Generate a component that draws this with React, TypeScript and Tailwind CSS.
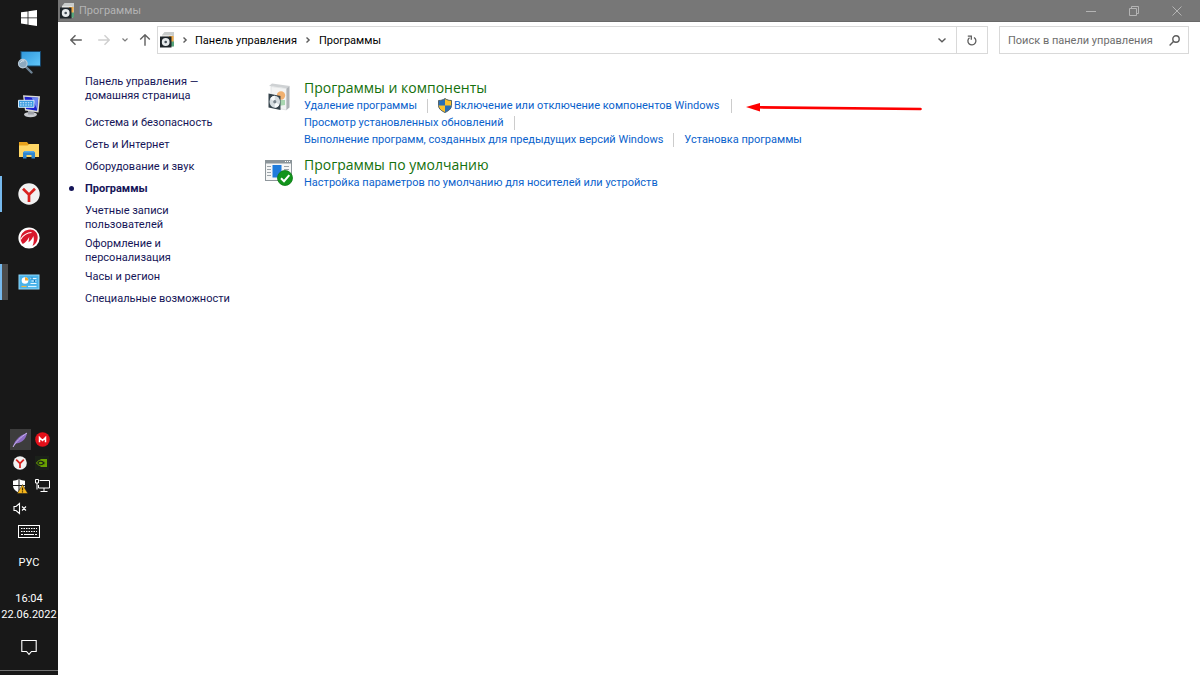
import React, { ReactNode } from 'react';

const WindowsLogo = () => (
  <svg width="16" height="16" viewBox="0 0 16 16" fill="#fff" aria-hidden="true">
    <path d="M0 2.3 6.6 1.4v6.1H0zM7.4 1.3 16 0v7.5H7.4zM0 8.3h6.6v6.2L0 13.6zM7.4 8.3H16V16l-8.6-1.3z" />
  </svg>
);

const SearchDesktopIcon = () => (
  <svg width="24" height="24" viewBox="0 0 24 24" aria-hidden="true">
    <defs>
      <linearGradient id="desk" x1="0" y1="0" x2="1" y2="1">
        <stop offset="0" stopColor="#2f97dc" />
        <stop offset="1" stopColor="#62c8fb" />
      </linearGradient>
    </defs>
    <rect x="4" y="1.5" width="19.5" height="14.5" fill="url(#desk)" stroke="#174a70" />
    <path d="m9 17 5.5 5.5" stroke="#6f8496" strokeWidth="2.4" strokeLinecap="round" />
    <circle cx="5.8" cy="13.6" r="4.3" fill="#8ca9c0" stroke="#b8c8d5" strokeWidth="1.2" />
    <path d="M3.4 12.8a3 3 0 0 1 3.8-1.9" stroke="#dfeaf2" fill="none" />
  </svg>
);

const RemoteKeyboardIcon = () => (
  <svg width="24" height="24" viewBox="0 0 24 24" aria-hidden="true">
    <ellipse cx="13.5" cy="20.6" rx="6.5" ry="2.6" fill="#c9cbd0" />
    <path d="M11 16h5.5l.5 4.5h-6z" fill="#9da0a8" />
    <path d="M6 1.2 23 2.3 21.5 18.5 8 16.5z" fill="#dcdcd8" />
    <path d="m7.5 2.8 13.7 1L20 16.7 9 15z" fill="#1c20cc" />
    <path d="M14.5 3.3 21.2 3.8 20 15z" fill="#6c86f2" />
    <path d="M1.5 6.3H17v7H1.5z" fill="#3a9be0" stroke="#d7eafa" strokeWidth="1" />
    <path d="M3 8.7h13M3 11h13" stroke="#e2f2ff" strokeWidth="1.1" strokeDasharray="1.6 1" />
  </svg>
);

const ExplorerIcon = () => (
  <svg width="22" height="20" viewBox="0 0 22 20" aria-hidden="true">
    <path d="M1 2h8l1.5 2H21v13H1z" fill="#e8a21c" />
    <path d="M1 5.5h8.5l2-1.5H21v13H1z" fill="#ffd766" />
    <path d="M5 18.5v-6L6.5 11h9l1.5 1.5v6h-3.5V15h-5v3.5z" fill="#2f86cf" />
    <path d="M6.5 11h9l1 1.5h-11z" fill="#5aaae6" />
  </svg>
);

const YandexIcon = ({ size }: { size: number }) => (
  <svg width={size} height={size} viewBox="0 0 22 22" aria-hidden="true">
    <circle cx="11" cy="11" r="10.7" fill="#f1f1f1" />
    <path d="M5 5.8 11 11.7l6-5.9M11 11.5v7.5" fill="none" stroke="#d9221f" strokeWidth="2.7" />
  </svg>
);

const DragonIcon = () => (
  <svg width="22" height="22" viewBox="0 0 22 22" aria-hidden="true">
    <circle cx="11" cy="11" r="10.6" fill="#fff" />
    <path
      d="M2.5 11C3.2 6 7 2.5 12.2 2.5c4.200 0 7.500 3.300 7.500 7.500 0 4-2 7.500-5.200 9 1.400-3.500 1.800-7 .8-10-.7 2.600-2.500 4.700-4.800 6.300l.8-5.600c-1.500 3.300-3.800 5.900-6.500 7.300C3.500 15.500 2.400 13.300 2.500 11z"
      fill="#d8182d"
    />
    <path d="M2.500 12.500C5 8.500 8.500 5.600 13.500 5.500" stroke="#fff" strokeWidth="1.200" fill="none" />
  </svg>
);

const ControlPanelIcon = () => (
  <svg width="22" height="16" viewBox="0 0 22 16" aria-hidden="true">
    <rect x="1" y="1" width="20" height="14" fill="#49b3ea" stroke="#8fd8fa" />
    <circle cx="7" cy="6.5" r="3.3" fill="#fff" />
    <path d="M7 6.5V3.2a3.3 3.3 0 0 1 3.3 3.3z" fill="#f3a62c" />
    <path d="M12.5 4.5h6M13.5 7h5M12.5 9.5h6" stroke="#e8f8ff" strokeWidth="1.2" />
    <path d="M14 3.5v2M16.5 6v2" stroke="#1675b6" strokeWidth="1.2" />
    <path d="M3.5 12.5h5" stroke="#f0b845" strokeWidth="1.2" />
    <path d="M10 12.5h8.5" stroke="#d7f2ff" strokeWidth="1.2" />
  </svg>
);

const FeatherIcon = () => (
  <svg width="16" height="16" viewBox="0 0 16 16" aria-hidden="true">
    <path d="M1 14.5C2 10.5 5.5 4 15 1c-.5 3.5-2 6-4.5 8-2 1.6-4.5 2.2-6.5 2.6z" fill="#8d6cc4" />
    <path d="M1 15C4 10 8 5.5 15 1" fill="none" stroke="#c8b4ec" />
  </svg>
);

const MegaIcon = () => (
  <svg width="15" height="15" viewBox="0 0 15 15" aria-hidden="true">
    <circle cx="7.5" cy="7.5" r="7.3" fill="#e3101a" />
    <path d="M4.5 10.3V5.5l3 3 3-3v4.8" fill="none" stroke="#fff" strokeWidth="1.5" />
  </svg>
);

const NvidiaIcon = () => (
  <svg width="14" height="14" viewBox="0 0 14 14" aria-hidden="true">
    <rect width="14" height="14" fill="#1b211a" />
    <path d="M5.5 3H12v8H5.5z" fill="#69a300" />
    <path d="M1.5 7c2-3.5 6-4 9 0C7.5 11 3.5 10 1.5 7z" fill="#1b211a" stroke="#69a300" />
    <path d="M3.5 7c1.2-1.7 3-1.7 4.5 0-1.5 1.7-3.3 1.5-4.5 0z" fill="#69a300" />
  </svg>
);

const DefenderIcon = () => (
  <svg width="16" height="16" viewBox="0 0 16 16" aria-hidden="true">
    <path d="M7 .8c2 1.4 4 1.9 6 2v4.7c0 3.5-3 5.8-6 7.2-3-1.4-6-3.7-6-7.2V2.8c2-.1 4-.6 6-2z" fill="#fff" />
    <path d="M7 1v13.5M1 7.5h12" stroke="#1a1a1a" />
    <path d="m10.5 6.5 5.3 9H5.2z" fill="#f5b51c" stroke="#1a1a1a" strokeWidth=".5" />
    <path d="M10.5 9.5v3M10.5 13.3v1.2" stroke="#3b2b00" strokeWidth="1.2" />
  </svg>
);

const NetworkIcon = () => (
  <svg width="16" height="15" viewBox="0 0 16 15" fill="none" stroke="#fff" aria-hidden="true">
    <path d="M5.5 2.5h10v7.5h-11V7M10 10v3M6.5 13.5h7" />
    <path d="M1.5 1.5h3v3.5h-3zM3 5v6.5" />
  </svg>
);

const MutedIcon = () => (
  <svg width="15" height="13" viewBox="0 0 15 13" fill="none" stroke="#fff" strokeWidth="1.1" aria-hidden="true">
    <path d="M1 4.5h2L6.5 1.5v10L3 8.5H1zM9 4.5l4 4M13 4.5l-4 4" />
  </svg>
);

const KeyboardIcon = () => (
  <svg width="22" height="13" viewBox="0 0 22 13" fill="none" stroke="#fff" aria-hidden="true">
    <rect x=".5" y=".5" width="21" height="12" />
    <path d="M3 3.5h16M3 6.5h16" strokeDasharray="1.5 1" />
    <path d="M3 9.5h2M6 9.5h10M17 9.5h2" />
  </svg>
);

const NotificationIcon = () => (
  <svg width="16" height="17" viewBox="0 0 16 17" fill="none" stroke="#fff" strokeWidth="1.1" aria-hidden="true">
    <path d="M.8 1.5h14.4v11H10.5L8 15.3 5.5 12.5H.8z" />
  </svg>
);

// Software box with a disc in front, dark version used in bars
const ProgramsIcon = () => (
  <svg width="15" height="16" viewBox="0 0 15 16" aria-hidden="true">
    <path d="m2 3 2.5-3H14v13l-2 2V3z" fill="#c9cccb" />
    <path d="M2 3h10v10H2z" fill="#e4e4e1" />
    <path d="M9 4h4.500v6H9z" fill="#f3ab45" />
    <path d="M11 9.500h3v5h-3z" fill="#57a47b" />
    <path d="M0 4.500h11.500v11H0z" fill="#1e2529" />
    <circle cx="5.700" cy="10" r="3.900" fill="#e7ebed" />
    <circle cx="5.700" cy="10" r="1.300" fill="#48525a" />
  </svg>
);

const ProgramsLargeIcon = () => (
  <svg width="28" height="28" viewBox="0 0 28 28" aria-hidden="true">
    <path d="m4 3 3-2.5L25 3l-2 2.5z" fill="#cfd2d4" />
    <path d="M6 3.5 21.5 5.5V27L6 24z" fill="#f3f4f4" stroke="#d4d6d8" strokeWidth=".6" />
    <path d="M21.5 5.5 24.5 3.5v21l-3 2.5z" fill="#aeb2b6" />
    <circle cx="16" cy="12.5" r="4.2" fill="#f0b070" />
    <path d="M13 17h7v5l-7 1z" fill="#a9d6b0" />
    <path d="M3.5 10.5 15.5 13v14L3.5 24.5z" fill="#34424b" />
    <ellipse cx="9.8" cy="18.7" rx="5.3" ry="6" fill="#d5dce0" />
    <path d="m9.8 18.7-4.5-3c1-2 2.5-3 4.5-3zM9.8 18.7l4.5 3c-1 2-2.5 3-4.5 3z" fill="#f7fafb" />
    <ellipse cx="9.8" cy="18.7" rx="1.6" ry="1.8" fill="#77838b" />
  </svg>
);

const DefaultsIcon = () => (
  <svg width="28" height="26" viewBox="0 0 28 26" aria-hidden="true">
    <rect x=".5" y=".5" width="26" height="20" fill="#f5f6f6" stroke="#8f979c" />
    <path d="M0 0h27v3.5H0z" fill="#8b9499" />
    <path d="M20 1.5h5" stroke="#fff" strokeDasharray="1 1" />
    <rect x="7.5" y="5" width="9" height="12.5" fill="#1f7bdb" />
    <path d="M2 6.5h4M2 9.5h4M2 12.5h4M2 15.5h4M19 6.5h5M19 9.5h5" stroke="#9ba3a8" />
    <circle cx="20" cy="18" r="7.5" fill="#12941c" stroke="#0b7a15" strokeWidth=".8" />
    <path d="m16 18.2 3 3 5.3-6" fill="none" stroke="#fff" strokeWidth="2" />
  </svg>
);

const ShieldIcon = () => (
  <svg width="14" height="15" viewBox="0 0 14 15" aria-hidden="true">
    <path d="M7 .5c2 1.5 4 2 6.5 2v5c0 3.5-3.5 5.7-6.5 7-3-1.3-6.5-3.5-6.5-7v-5C3 2.5 5 2 7 .5z" fill="#2a6fb8" />
    <path d="M7 .5c2 1.5 4 2 6.5 2v5H7zM7 7.5v7c-3-1.3-6.5-3.5-6.5-7z" fill="#fbc22f" />
    <path d="M7 .5c2 1.5 4 2 6.5 2v5c0 3.5-3.5 5.7-6.5 7-3-1.3-6.5-3.5-6.5-7v-5C3 2.5 5 2 7 .5z" fill="none" stroke="#4c5a5f" strokeWidth=".9" />
  </svg>
);

const Chevron = ({ down = false }: { down?: boolean }) => (
  <svg width="8" height="8" viewBox="0 0 8 8" fill="none" stroke="#5c5c5c" strokeWidth="1.4" aria-hidden="true">
    {down ? <path d="m.5 2.5 3.5 3.3 3.5-3.3" /> : <path d="m2.5 1.5 2.6 2.5-2.6 2.5" />}
  </svg>
);

const RedArrow = () => (
  <svg width="176" height="11" viewBox="0 0 176 11" className="absolute left-full top-1/2 ml-3.5 -translate-y-1" aria-hidden="true">
    <path d="M12 5.3 174.5 7" stroke="#fe0000" strokeWidth="2.6" strokeLinecap="round" />
    <path d="M0 5 14 1v8.5z" fill="#fe0000" />
  </svg>
);

const taskbarApps = [
  { name: 'Поиск', icon: <SearchDesktopIcon /> },
  { name: 'Удаленный рабочий стол', icon: <RemoteKeyboardIcon /> },
  { name: 'Проводник', icon: <ExplorerIcon /> },
  { name: 'Яндекс', icon: <YandexIcon size={22} />, running: true },
  { name: 'Dragon', icon: <DragonIcon /> },
  { name: 'Панель управления', icon: <ControlPanelIcon />, running: true, grouped: true },
];

const trayIcons = [
  { name: 'Перо', icon: <FeatherIcon />, active: true },
  { name: 'MEGA', icon: <MegaIcon /> },
  { name: 'Яндекс', icon: <YandexIcon size={14} /> },
  { name: 'NVIDIA', icon: <NvidiaIcon /> },
  { name: 'Безопасность', icon: <DefenderIcon /> },
  { name: 'Сеть', icon: <NetworkIcon /> },
  { name: 'Звук', icon: <MutedIcon /> },
];

const categories = [
  'Система и безопасность',
  'Сеть и Интернет',
  'Оборудование и звук',
  'Программы',
  'Учетные записи пользователей',
  'Оформление и персонализация',
  'Часы и регион',
  'Специальные возможности',
];

const Taskbar = () => (
  <aside className="flex w-[58px] shrink-0 flex-col items-center bg-[#181818] text-white">
    <button aria-label="Пуск" className="flex h-10 w-full items-center justify-center pb-1">
      <WindowsLogo />
    </button>
    {taskbarApps.map((app) => (
      <button key={app.name} aria-label={app.name} className="relative flex h-11 w-full items-center justify-center">
        {app.running && <span className="absolute left-0 top-1 h-9 w-[2px] bg-[#76b9ed]" />}
        {app.grouped && <span className="absolute left-[2px] top-1 h-9 w-1.5 bg-[#4b4b4b]" />}
        {app.icon}
      </button>
    ))}
    <div className="mt-auto grid grid-cols-2 gap-x-px gap-y-0.5 pl-1">
      {trayIcons.map((item) => (
        <button
          key={item.name}
          aria-label={item.name}
          className={`flex h-[21px] w-[21px] items-center justify-center ${item.active ? 'bg-[#3d3d3d]' : ''}`}
        >
          {item.icon}
        </button>
      ))}
    </div>
    <button aria-label="Клавиатура" className="flex h-6 items-center">
      <KeyboardIcon />
    </button>
    <button className="mt-1 text-[11px] leading-8">РУС</button>
    <button className="mt-3 text-center text-[11px] leading-4">
      <span className="block">16:04</span>
      <span className="block">22.06.2022</span>
    </button>
    <button aria-label="Уведомления" className="mt-3.5 flex h-5 items-center">
      <NotificationIcon />
    </button>
    <div className="mb-1 mt-[13px] h-px w-full bg-[#707070]" />
  </aside>
);

const TitleBar = () => (
  <header className="flex h-[22px] items-center border-b border-[#696969] bg-[#777777] pl-0.5 pr-0.5 text-[#b4b4b4]">
    <ProgramsIcon />
    <h1 className="ml-1 pt-0.5 text-[11px]">Программы</h1>
    <div className="ml-auto flex items-center">
      <button aria-label="Свернуть" className="flex w-[43px] justify-center">
        <svg width="10" height="10" viewBox="0 0 10 10" stroke="#b4b4b4">
          <path d="M0 5.5h10" />
        </svg>
      </button>
      <button aria-label="Свернуть в окно" className="flex w-[43px] justify-center">
        <svg width="10" height="10" viewBox="0 0 10 10" fill="none" stroke="#b4b4b4">
          <path d="M.5 2.5h7v7h-7zM2.5 2.5v-2h7v7h-2" />
        </svg>
      </button>
      <button aria-label="Закрыть" className="flex w-[43px] justify-center">
        <svg width="10" height="10" viewBox="0 0 10 10" stroke="#b4b4b4">
          <path d="m.5.5 9 9M9.5.5l-9 9" />
        </svg>
      </button>
    </div>
  </header>
);

const Toolbar = () => (
  <div className="flex items-center pl-3 pr-[11px] pt-1">
    <button aria-label="Назад">
      <svg width="12" height="12" viewBox="0 0 12 12" fill="none" stroke="#5f5f5f" strokeWidth="1.4">
        <path d="M11.8 6H1M5.5 1.2.8 6l4.7 4.8" />
      </svg>
    </button>
    <button aria-label="Вперед" className="ml-4">
      <svg width="12" height="12" viewBox="0 0 12 12" fill="none" stroke="#cfcfcf" strokeWidth="1.4">
        <path d="M.2 6H11M6.5 1.2 11.2 6l-4.7 4.8" />
      </svg>
    </button>
    <button aria-label="Последние расположения" className="ml-3">
      <svg width="6" height="6" viewBox="0 0 6 6" fill="none" stroke="#7c7c7c" strokeWidth="1.2">
        <path d="m.5 1.5 2.5 2.5 2.5-2.5" />
      </svg>
    </button>
    <button aria-label="Вверх" className="ml-[11px]">
      <svg width="12" height="12" viewBox="0 0 12 12" fill="none" stroke="#5f5f5f" strokeWidth="1.4">
        <path d="M6 11.8V1M1.2 5.5 6 .8l4.8 4.7" />
      </svg>
    </button>
    <nav className="ml-1.5 flex h-7 flex-1 items-center border border-[#d9d9d9] pl-0.5 text-[11px] text-black">
      <ProgramsIcon />
      <span className="ml-1.5"><Chevron /></span>
      <a href="#panel" className="ml-1.5 pt-0.5">Панель управления</a>
      <span className="ml-[7px]"><Chevron /></span>
      <a href="#programs" className="ml-[7px] pt-0.5">Программы</a>
      <button aria-label="Предыдущие расположения" className="ml-auto flex h-full w-7 items-center justify-center">
        <Chevron down />
      </button>
      <button aria-label="Обновить" className="flex h-full w-[31px] items-center justify-center border-l border-[#d9d9d9]">
        <svg width="10" height="11" viewBox="0 0 10 11" fill="none" stroke="#5c5c5c" strokeWidth="1.3">
          <path d="M7 2.500a4 4 0 1 1-4.500.2M.8 1.200h3.500v3.500" />
        </svg>
      </button>
    </nav>
    <label className="ml-[11px] flex h-7 w-[190px] items-center border border-[#d9d9d9] pl-2 pr-2">
      <input
        type="search"
        aria-label="Поиск в панели управления"
        placeholder="Поиск в панели управления"
        className="min-w-0 flex-1 pt-0.5 text-[11px] outline-none placeholder:text-[#6d6d6d]"
      />
      <svg width="11" height="11" viewBox="0 0 11 11" fill="none" stroke="#5c5c5c" strokeWidth="1.4" aria-hidden="true">
        <circle cx="7" cy="4" r="3.2" />
        <path d="M4.7 6.3.6 10.4" />
      </svg>
    </label>
  </div>
);

const Sidebar = () => (
  <nav className="w-[207px] shrink-0 pl-[27px] pt-px text-[11px] leading-[14px] text-[#151558]">
    <a href="#home" className="block w-[130px]">Панель управления — домашняя страница</a>
    <ul className="mt-[13px] space-y-[5px]">
      {categories.map((name) => (
        <li key={name} className="relative min-h-[17px]">
          {name === 'Программы' && (
            <span className="absolute -left-4 top-1 h-[5px] w-[5px] rounded-full bg-[#151558]" />
          )}
          <a
            href="#category"
            className={`block ${name.length > 25 ? 'w-[110px]' : 'whitespace-nowrap'} ${name === 'Программы' ? 'font-bold' : ''}`}
          >
            {name}
          </a>
        </li>
      ))}
    </ul>
  </nav>
);

const Divider = () => <span className="mx-2.5 h-3.5 w-px shrink-0 bg-[#cccccc]" />;

const Section = ({ icon, title, children }: { icon: ReactNode; title: string; children: ReactNode }) => (
  <section className="flex">
    <div className="w-[39px] shrink-0 pt-1">{icon}</div>
    <div>
      <h2 className="font-['Open_Sans','Noto_Sans',sans-serif] text-[14px] leading-[18px] text-[#14700c]">{title}</h2>
      <div className="text-[11px] leading-[17px] text-[#0a62cc]">{children}</div>
    </div>
  </section>
);

export default function App() {
  return (
    <div className="flex min-h-screen bg-white font-['Roboto','Noto_Sans',sans-serif]">
      <Taskbar />
      <div className="flex min-w-0 flex-1 flex-col">
        <TitleBar />
        <Toolbar />
        <div className="flex pt-5">
          <Sidebar />
          <main className="space-y-2 whitespace-nowrap pt-[5px]">
            <Section icon={<ProgramsLargeIcon />} title="Программы и компоненты">
              <div className="relative flex w-fit items-center">
                <a href="#uninstall">Удаление программы</a>
                <Divider />
                <a href="#features" className="flex items-center gap-0.5">
                  <ShieldIcon />
                  Включение или отключение компонентов Windows
                </a>
                <span className="ml-3 h-3.5 w-px bg-[#cccccc]" />
                <RedArrow />
              </div>
              <div className="flex items-center">
                <a href="#updates">Просмотр установленных обновлений</a>
                <Divider />
              </div>
              <div className="flex items-center">
                <a href="#compat">Выполнение программ, созданных для предыдущих версий Windows</a>
                <Divider />
                <a href="#install">Установка программы</a>
              </div>
            </Section>
            <Section icon={<DefaultsIcon />} title="Программы по умолчанию">
              <a href="#defaults">Настройка параметров по умолчанию для носителей или устройств</a>
            </Section>
          </main>
        </div>
      </div>
    </div>
  );
}
